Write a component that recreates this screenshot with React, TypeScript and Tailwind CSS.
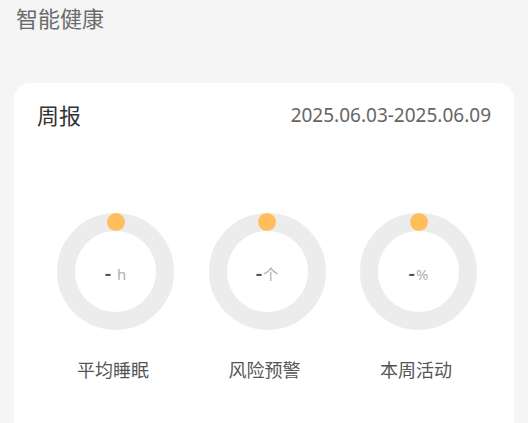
import React from "react";

const stats = [
  { label: "平均睡眠", unit: "h", gap: true },
  { label: "风险预警", unit: "个", gap: false },
  { label: "本周活动", unit: "%", gap: false },
];

const Ring: React.FC<{ unit: string; gap: boolean }> = ({ unit, gap }) => (
  <div className="relative w-[117px] h-[117px]">
    <div className="absolute inset-0 rounded-full border-[18px] border-[#ececec]" />
    <div className="absolute left-1/2 top-0 -translate-x-1/2 w-[18px] h-[18px] rounded-full bg-[#ffbd5c]" />
    <div className="absolute inset-0 flex items-baseline justify-center pt-[50px]">
      <span className="text-[20px] font-semibold text-[#555] leading-none">-</span>
      <span className={`text-[15px] text-[#b5aea8] leading-none ${gap ? "ml-[6px]" : "ml-[1px]"}`}>
        {unit}
      </span>
    </div>
  </div>
);

export default function App() {
  return (
    <div
      className="w-[528px] h-[423px] overflow-hidden bg-[#f5f5f5]"
      style={{ fontFamily: '"Noto Sans", "Noto Sans CJK SC", sans-serif' }}
    >
      <div className="px-4 pt-[3px] text-[22px] leading-[30px] text-[#6b6b6b]">智能健康</div>
      <div className="mx-[14px] mt-[50px] h-[400px] rounded-[16px] bg-white">
        <div className="flex items-center justify-between px-[23px] pt-[17px]">
          <span className="text-[22px] leading-[30px] text-[#333]">周报</span>
          <span className="text-[19px] leading-[30px] text-[#666]">2025.06.03-2025.06.09</span>
        </div>
        <div className="flex justify-between pl-[43px] pr-[37px] mt-[83px]">
          {stats.map((s) => (
            <div key={s.label} className="flex flex-col items-center">
              <Ring unit={s.unit} gap={s.gap} />
              <span className="mt-[28px] -ml-[5px] text-[18px] leading-[24px] text-[#555]">{s.label}</span>
            </div>
          ))}
        </div>
      </div>
    </div>
  );
}
